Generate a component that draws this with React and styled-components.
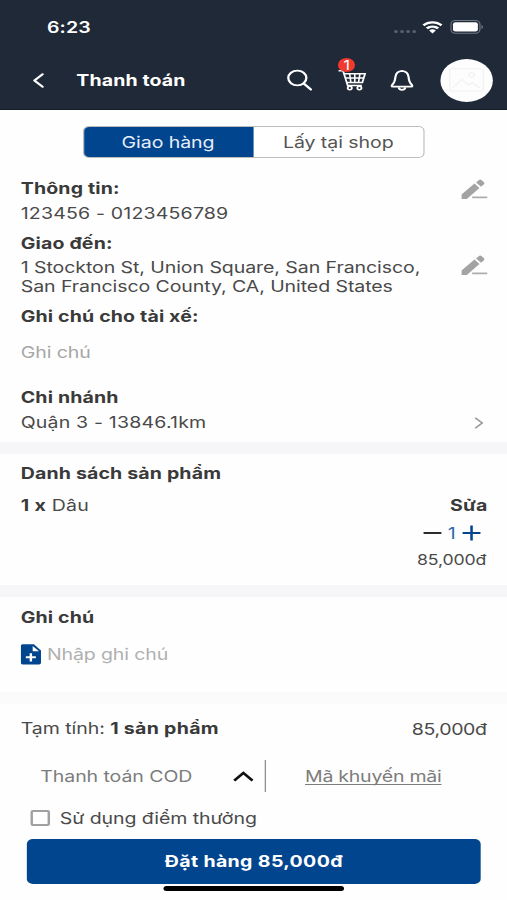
import React, { useState } from "react";
import styled, { createGlobalStyle } from "styled-components";

const products = [{ id: 1, name: "Dâu", quantity: 1, price: "85,000đ" }];

const EditIcon = () => (
  <svg width="22" height="21" viewBox="0 0 22 21">
    <path
      d="M0.3 15.6 L10.9 4.6 L15 8.9 L4.6 19.9 L0.3 19.9 Z M12.2 3.5 L14.6 1 Q15.6 0.1 16.6 1 L18.7 3.2 Q19.6 4.2 18.7 5.2 L16.3 7.8 Z"
      fill="#a3a3a3"
    />
    <path d="M9 18.4 H21.4" stroke="#adadad" strokeWidth="1.6" />
  </svg>
);

const CartIcon = () => (
  <svg width="23" height="22" viewBox="0 0 23 22" fill="none" stroke="#fff">
    <path d="M0.5 1.8 H3.4 Q4.1 1.8 4.4 2.5 L8 16.6 H19.6" strokeWidth="1.5" />
    <path d="M5 4.8 H22.2 L20 13.6 H7.2" strokeWidth="1.5" />
    <path d="M5.8 9 H21 M9.6 4.8 L10.6 13.6 M13.8 4.8 V13.6 M18 4.8 L16.9 13.6" strokeWidth="1.3" />
    <circle cx="9.7" cy="19" r="1.7" strokeWidth="1.5" />
    <circle cx="17.6" cy="19" r="1.7" strokeWidth="1.5" />
  </svg>
);

const App = () => {
  const [method, setMethod] = useState("delivery");
  return (
    <>
      <GlobalStyle />
      <Screen>
        <Header>
          <StatusBar>
            <Time>6:23</Time>
            <Signal>
              <i />
              <i />
              <i />
              <i />
            </Signal>
            <svg width="17" height="13" viewBox="0 0 17 13" fill="#fff">
              <path d="M8.5 0.3 C5.3 0.3 2.4 1.5 0.3 3.6 L1.9 5.3 C3.7 3.6 6 2.6 8.5 2.6 C11 2.6 13.3 3.6 15.1 5.3 L16.7 3.6 C14.6 1.5 11.7 0.3 8.5 0.3 Z" />
              <path d="M8.5 4.4 C6.4 4.4 4.5 5.2 3 6.5 L4.7 8.2 C5.7 7.3 7 6.7 8.5 6.7 C10 6.7 11.3 7.3 12.3 8.2 L14 6.5 C12.5 5.2 10.6 4.4 8.5 4.4 Z" />
              <path d="M8.5 8.3 C7.5 8.3 6.5 8.7 5.8 9.4 L8.5 12.6 L11.2 9.4 C10.5 8.7 9.5 8.3 8.5 8.3 Z" />
            </svg>
            <Battery width="27" height="14" viewBox="0 0 27 14">
              <rect x="0.6" y="0.6" width="23.8" height="12.6" rx="3.6" fill="none" stroke="#6f7883" />
              <rect x="2.3" y="2.2" width="20.4" height="9.4" rx="2" fill="#fff" />
              <path d="M25.6 4.8 Q27 6 27 7 Q27 8 25.6 9.2 Z" fill="#6f7883" />
            </Battery>
          </StatusBar>
          <NavBar>
            <svg width="10" height="15" viewBox="0 0 10 15" fill="none" stroke="#fff" strokeWidth="1.9">
              <path d="M7.9 1.2 L1.2 7.5 L7.9 13.8" strokeLinecap="round" strokeLinejoin="round" />
            </svg>
            <Title>Thanh toán</Title>
            <Actions>
              <svg width="21" height="22" viewBox="0 0 21 22" fill="none" stroke="#fff" strokeWidth="1.9">
                <circle cx="8.7" cy="9" r="7.4" />
                <path d="M14 14.4 L19.8 20.4" strokeWidth="2.1" strokeLinecap="round" />
              </svg>
              <CartButton>
                <CartIcon />
                <Badge>1</Badge>
              </CartButton>
              <svg width="19" height="22" viewBox="0 0 19 22" fill="none" stroke="#fff" strokeWidth="1.8">
                <path
                  d="M9.5 1.8 C6 2.2 4.4 4.6 4.1 8 C3.8 12 3.4 13.6 1.6 15.6 C0.6 16.8 0.8 17.7 2 17.7 H17 C18.2 17.7 18.4 16.8 17.4 15.6 C15.6 13.6 15.2 12 14.9 8 C14.6 4.6 13 2.2 9.5 1.8 Z"
                  strokeLinejoin="round"
                />
                <path d="M6.8 18.3 Q7.2 20.8 9.5 20.8 Q11.8 20.8 12.2 18.3" />
              </svg>
              <Avatar>
                <svg width="29" height="24" viewBox="0 0 29 24" fill="none" stroke="#f1f1f1">
                  <rect x="0.7" y="0.7" width="27.4" height="22.4" rx="1.5" />
                  <path d="M3 20 L10.5 11.5 L16 17 L19 14.5 L25.5 20" />
                  <circle cx="18.6" cy="6.8" r="2.2" />
                </svg>
              </Avatar>
            </Actions>
          </NavBar>
        </Header>

        <Info>
          <Tabs>
            <Tab $active={method === "delivery"} onClick={() => setMethod("delivery")}>
              Giao hàng
            </Tab>
            <Tab $active={method === "pickup"} onClick={() => setMethod("pickup")}>
              Lấy tại shop
            </Tab>
          </Tabs>
          <Row>
            <Contact>
              <Label>Thông tin:</Label>
              <Value>123456 - 0123456789</Value>
            </Contact>
            <EditIcon />
          </Row>
          <Row>
            <Address>
              <Label>Giao đến:</Label>
              <p>
                1 Stockton St, Union Square, San Francisco,
                <br />
                San Francisco County, CA, United States
              </p>
            </Address>
            <EditIcon />
          </Row>
          <DriverNote>
            <Label>Ghi chú cho tài xế:</Label>
            <Placeholder>Ghi chú</Placeholder>
          </DriverNote>
          <Label>Chi nhánh</Label>
          <Branch>
            <Value>Quận 3 - 13846.1km</Value>
            <svg width="8" height="12" viewBox="0 0 8 12" fill="none" stroke="#999" strokeWidth="1.5">
              <path d="M0.5 0.8 L6.2 6 L0.5 11.2" />
            </svg>
          </Branch>
        </Info>

        <Products>
          <Label>Danh sách sản phẩm</Label>
          {products.map((product) => (
            <Product key={product.id}>
              <Value>
                <b>{product.quantity} x</b> {product.name}
              </Value>
              <ProductSide>
                <Label>Sửa</Label>
                <Stepper>
                  <svg width="15" height="16" viewBox="0 0 15 16">
                    <path d="M0 8 H15" stroke="#2b2b2b" strokeWidth="2" />
                  </svg>
                  <span>{product.quantity}</span>
                  <svg width="15" height="16" viewBox="0 0 15 16">
                    <path d="M0 8 H15 M7.5 0.5 V15.5" stroke="#02458f" strokeWidth="2.1" />
                  </svg>
                </Stepper>
                <Price>{product.price}</Price>
              </ProductSide>
            </Product>
          ))}
        </Products>

        <Notes>
          <Label>Ghi chú</Label>
          <NoteInput>
            <svg width="17" height="21" viewBox="0 0 17 21">
              <path
                d="M1.6 0.3 H10.8 L16.6 6.4 V18.8 Q16.6 20.6 15 20.6 H1.6 Q0 20.6 0 18.8 V2 Q0 0.3 1.6 0.3 Z"
                fill="#02458f"
              />
              <path d="M9.8 2 V7.2 H15 Z" fill="#fff" />
              <path d="M4.2 13.3 H12.4 M8.3 9.2 V17.4" stroke="#fff" strokeWidth="2" />
            </svg>
            <span>Nhập ghi chú</span>
          </NoteInput>
        </Notes>

        <Summary>
          <Subtotal>
            <Value>
              Tạm tính: <b>1 sản phẩm</b>
            </Value>
            <Total>85,000đ</Total>
          </Subtotal>
          <Options>
            <Payment>
              <span>Thanh toán COD</span>
              <svg width="17" height="11" viewBox="0 0 17 11" fill="none" stroke="#111" strokeWidth="2.4">
                <path d="M1 9.6 L8.5 2 L16 9.6" />
              </svg>
            </Payment>
            <Coupon>Mã khuyến mãi</Coupon>
          </Options>
          <Reward>
            <Checkbox />
            <span>Sử dụng điểm thưởng</span>
          </Reward>
          <OrderButton>Đặt hàng 85,000đ</OrderButton>
          <HomeIndicator />
        </Summary>
      </Screen>
    </>
  );
};

const GlobalStyle = createGlobalStyle`
  * {
    box-sizing: border-box;
  }
  body {
    margin: 0;
    background: #fff;
    overflow: hidden;
  }
  h3, p {
    margin: 0;
  }
  svg {
    display: block;
    flex-shrink: 0;
  }
`;

const Screen = styled.div`
  width: 415.57px;
  height: 900px;
  display: flex;
  flex-direction: column;
  transform: scaleX(1.22);
  transform-origin: left top;
  background: #fefefe;
  color: #4a4a4a;
  font-family: Inter, "Noto Sans", sans-serif;
  font-size: 16px;
  line-height: 24px;
  letter-spacing: -0.06px;
  white-space: nowrap;
  b {
    font-weight: 700;
    letter-spacing: 0.25px;
    color: #3a3a3a;
  }
`;

const Header = styled.header`
  height: 110px;
  background: #1f2937;
  color: #fff;
  border-bottom: 1px solid #151d29;
`;

const StatusBar = styled.div`
  display: flex;
  align-items: center;
  height: 54px;
  padding: 0 19.5px 0 38.5px;
`;

const Time = styled.span`
  flex: 1;
  font-weight: 600;
  letter-spacing: 0.1px;
`;

const Signal = styled.div`
  display: flex;
  gap: 2.2px;
  margin: 9px 5px 0 0;
  i {
    width: 3px;
    height: 3.5px;
    border-radius: 50%;
    background: #566170;
  }
`;

const Battery = styled.svg`
  margin-left: 6px;
`;

const NavBar = styled.div`
  display: flex;
  align-items: center;
  height: 53px;
  padding: 0 11.3px 0 26.5px;
`;

const Title = styled.span`
  margin: -1px 0 0 26px;
  font-weight: 700;
  letter-spacing: 0.1px;
`;

const Actions = styled.div`
  display: flex;
  align-items: center;
  margin-left: auto;
`;

const CartButton = styled.div`
  position: relative;
  margin: 0 20px 0 21px;
`;

const Badge = styled.span`
  position: absolute;
  top: -11px;
  left: -0.3px;
  width: 14.2px;
  height: 14px;
  border-radius: 50%;
  background: #f03a30;
  font-size: 13px;
  line-height: 14px;
  text-align: center;
`;

const Avatar = styled.div`
  display: flex;
  align-items: center;
  justify-content: center;
  width: 43.4px;
  height: 43.4px;
  margin-left: 21.5px;
  border-radius: 50%;
  background: #fdfdfd;
`;

const Section = styled.section`
  padding: 0 16px 0 17px;
  border-bottom: 12px solid #f6f6f8;
`;

const Info = styled(Section)`
  height: 344px;
  padding-top: 16px;
`;

const Tabs = styled.div`
  display: flex;
  width: 280px;
  height: 32px;
  margin: 0 0 18px 51px;
  border: 1px solid #bdbdbd;
  border-radius: 5px;
  overflow: hidden;
`;

const Tab = styled.div`
  flex: 1;
  line-height: 30px;
  text-align: center;
  letter-spacing: -0.05px;
  margin: ${({ $active }) => ($active ? "-1px 0 -1px -1px" : "0")};
  padding-top: ${({ $active }) => ($active ? "1px" : "0")};
  background: ${({ $active }) => ($active ? "#02458f" : "#fff")};
  color: ${({ $active }) => ($active ? "#e6eef8" : "#555")};
`;

const Row = styled.div`
  display: flex;
  align-items: center;
  justify-content: space-between;
`;

const Label = styled.h3`
  font-size: 16px;
  font-weight: 700;
  line-height: 24px;
  letter-spacing: 0.13px;
  color: #3a3a3a;
`;

const Value = styled.p`
  line-height: 25px;
  letter-spacing: 0.15px;
`;

const Contact = styled.div`
  height: 54.5px;
  p {
    margin-top: 1px;
  }
  & + svg {
    margin-bottom: 27px;
  }
`;

const Address = styled.div`
  height: 73.5px;
  p {
    margin-top: 3.5px;
    line-height: 19.4px;
  }
  & + svg {
    margin-bottom: 4.5px;
  }
`;

const DriverNote = styled.div`
  height: 80.5px;
`;

const Placeholder = styled.p`
  line-height: 48px;
  color: #a6a6a6;
`;

const Branch = styled(Row)`
  margin-top: 1.5px;
  padding-right: 3px;
`;

const Products = styled(Section)`
  height: 143px;
  padding-top: 7px;
`;

const Product = styled.div`
  display: flex;
  justify-content: space-between;
  margin-top: 8px;
`;

const ProductSide = styled.div`
  display: flex;
  flex-direction: column;
  align-items: flex-end;
`;

const Stepper = styled.div`
  display: flex;
  align-items: center;
  gap: 5px;
  margin: 4px 6px 0 0;
  color: #2c68ad;
`;

const Price = styled.span`
  margin: 3px 1px 0 0;
  font-size: 14.5px;
  letter-spacing: -0.1px;
`;

const Notes = styled(Section)`
  height: 106.5px;
  padding-top: 8px;
  border-image: linear-gradient(#f4f4f6, #fbfbfc) 12;
`;

const NoteInput = styled.div`
  display: flex;
  align-items: center;
  gap: 5px;
  margin: 12.5px 0 0 -0.5px;
  letter-spacing: -0.1px;
  color: #b0b0b0;
  svg {
    margin-top: 1px;
  }
`;

const Summary = styled.footer`
  flex: 1;
  padding: 12.5px 16px 0 17px;
`;

const Subtotal = styled(Row)`
  p {
    letter-spacing: -0.05px;
  }
`;

const Total = styled.span`
  margin: 0 0.7px 0 0;
  letter-spacing: -0.3px;
`;

const Options = styled.div`
  display: flex;
  align-items: center;
  height: 32px;
  margin: 19px 0 13.5px;
  color: #7c7c7c;
`;

const Payment = styled.div`
  display: flex;
  align-items: center;
  justify-content: space-between;
  width: 201px;
  height: 32px;
  padding: 0 9px 0 16px;
  border-right: 1.3px solid #8a8a8a;
`;

const Coupon = styled.span`
  margin-left: 32px;
  letter-spacing: -0.2px;
  text-decoration: underline;
  text-decoration-thickness: 1px;
  text-underline-offset: 2px;
  text-decoration-skip-ink: none;
`;

const Reward = styled.div`
  display: flex;
  align-items: center;
  height: 24px;
  gap: 8px;
  padding-left: 7.5px;
`;

const Checkbox = styled.div`
  width: 16.5px;
  height: 16px;
  border: 2px solid #a0a0a0;
  border-radius: 2px;
`;

const OrderButton = styled.div`
  height: 45px;
  margin: 9px 5.3px 0 4.8px;
  border-radius: 5px;
  background: #02458f;
  color: #fff;
  font-weight: 700;
  line-height: 45px;
  letter-spacing: 0.3px;
  text-align: center;
`;

const HomeIndicator = styled.div`
  width: 148px;
  height: 5px;
  margin: 2px auto 0;
  border-radius: 3px;
  background: #000;
`;

export default App;
